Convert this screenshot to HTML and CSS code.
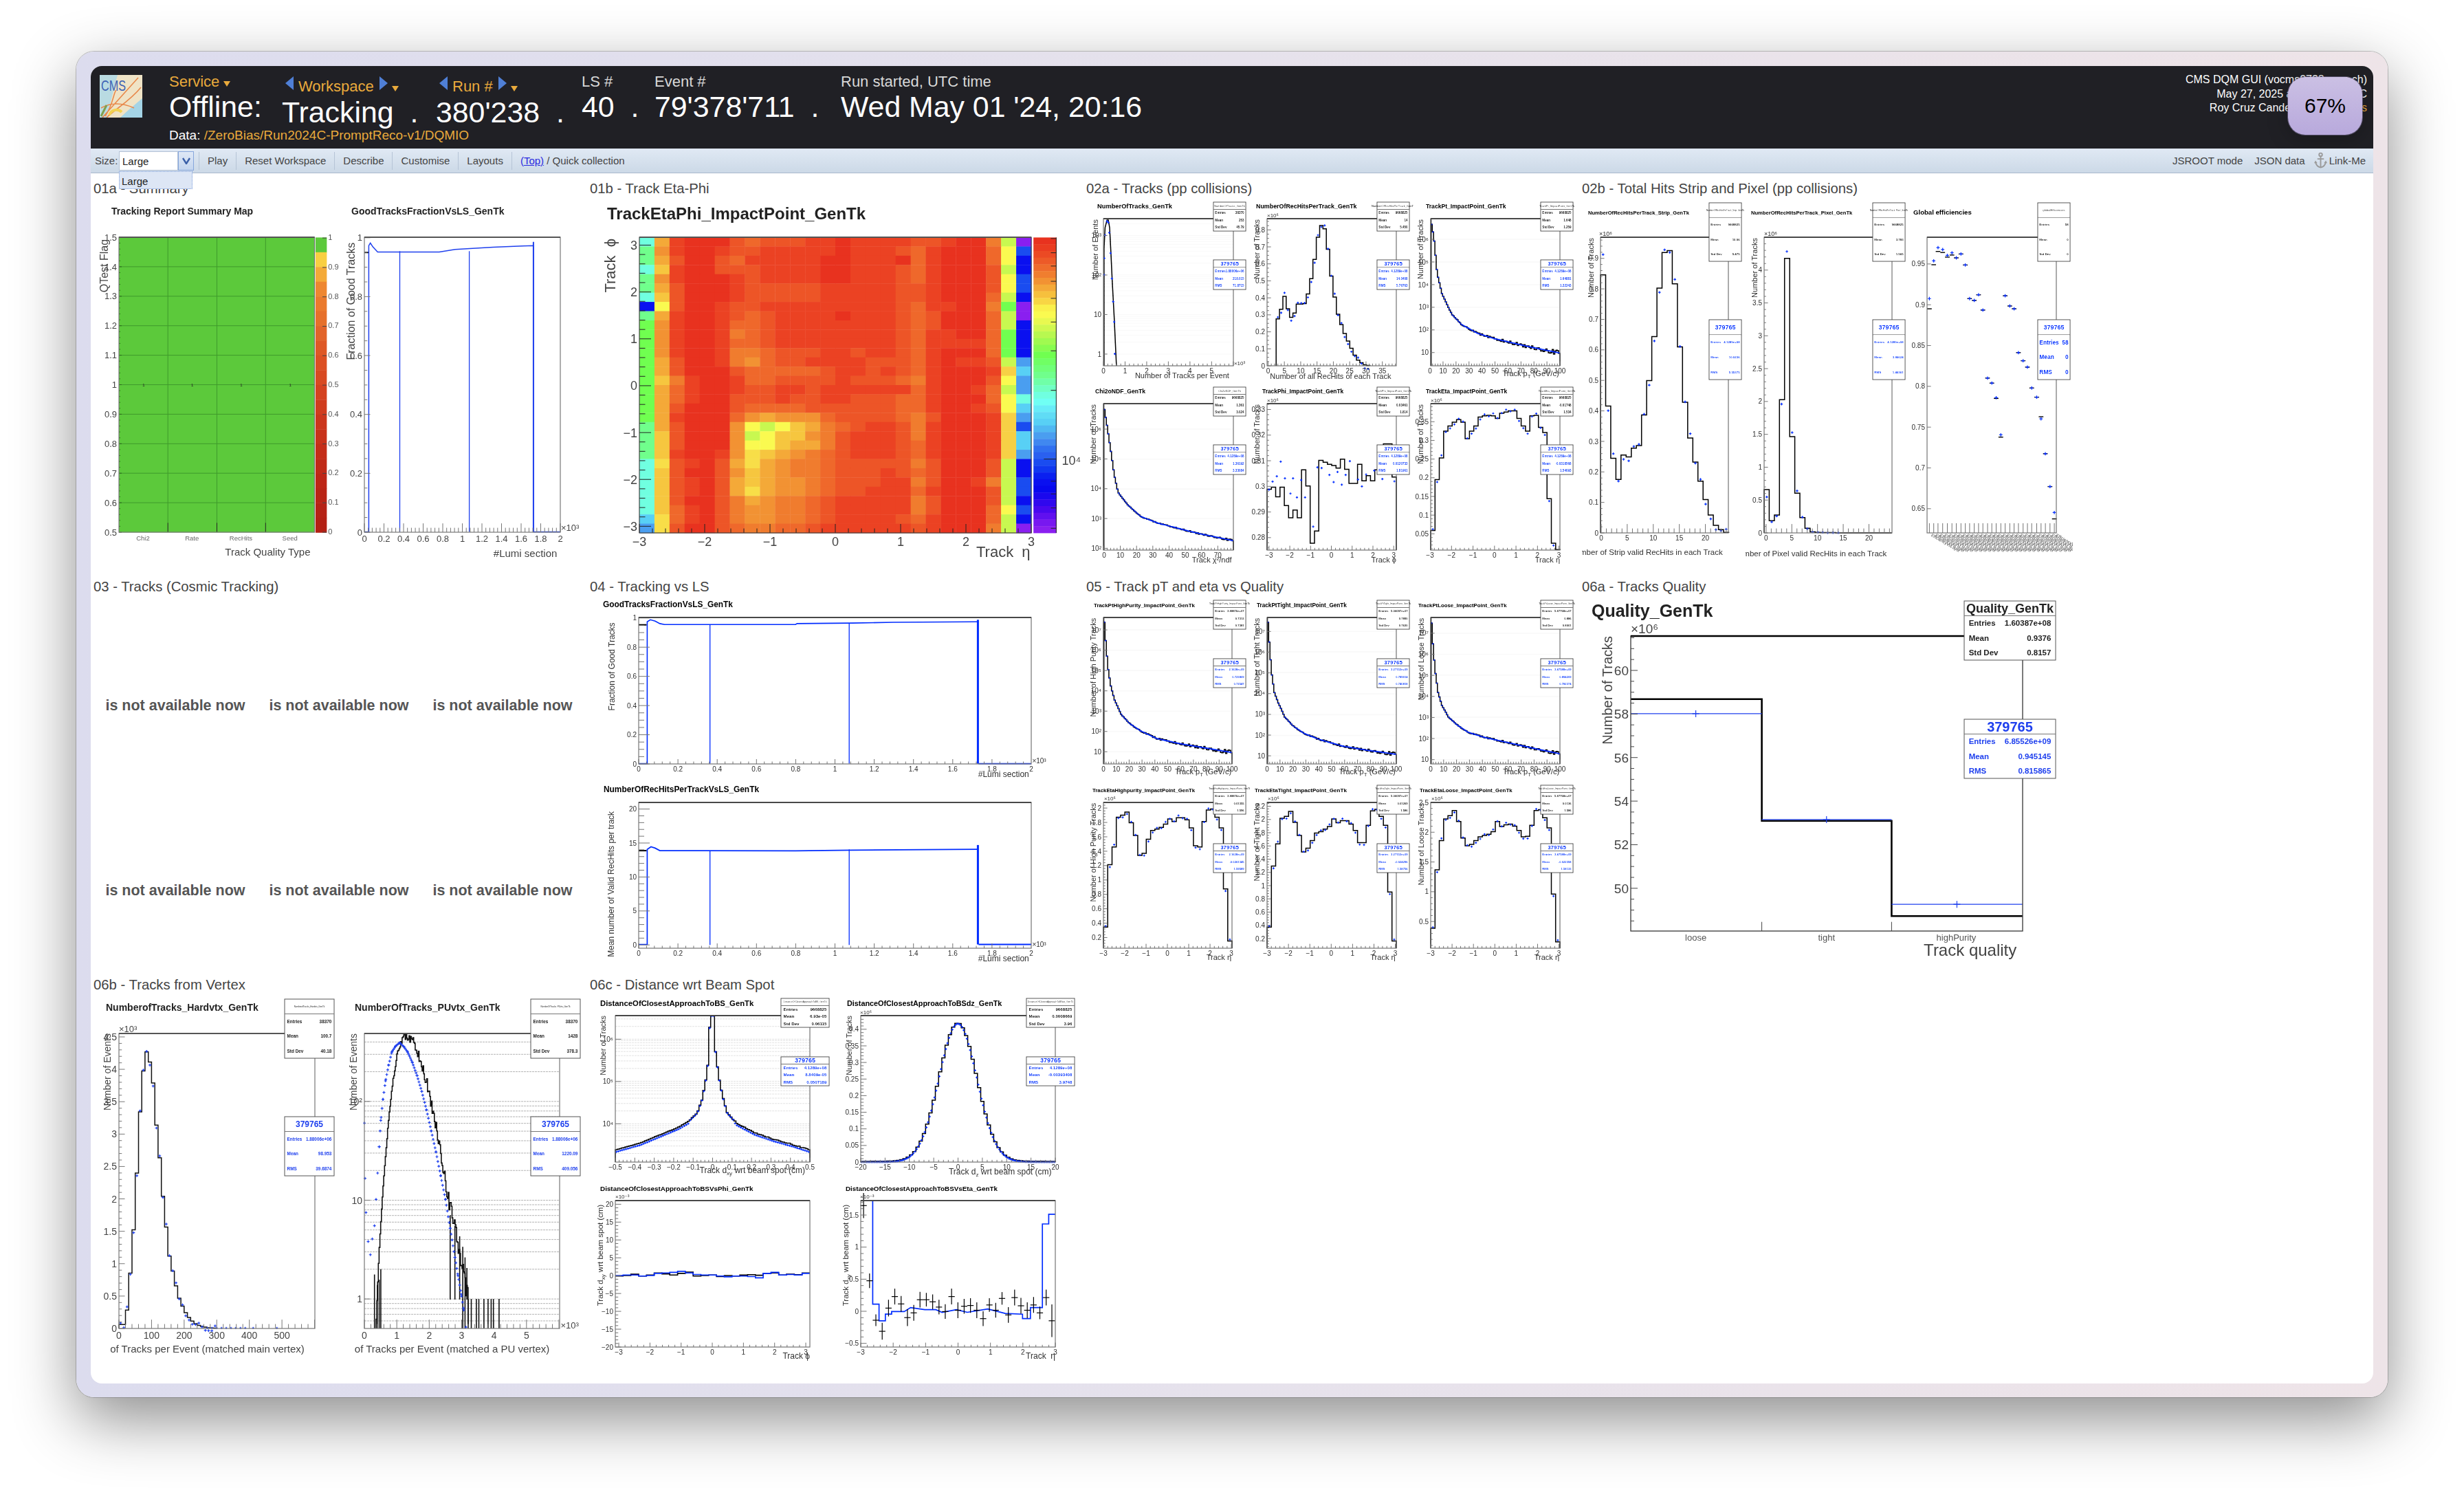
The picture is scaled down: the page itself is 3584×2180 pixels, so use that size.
FILE: index.html
```html
<!DOCTYPE html>
<html lang="en">
<head>
    <meta charset="UTF-8">
    <title>CMS DQM GUI</title>
    <link rel="stylesheet" href="styles.css">
</head>
<body>

<div class="bezel">
<div class="app">

    <header class="head">
        <svg class="logo" viewBox="0 0 62 62" width="62" height="62">
            <rect width="62" height="62" fill="#efe3c6"/>
            <path d="M0 0H26L10 62H0Z" fill="#b9dbe2"/>
            <path d="M62 34V62H30C38 54 50 44 62 34Z" fill="#a4d4e6"/>
            <path d="M4 62C18 46 38 24 56 4M10 62C22 50 44 38 60 18M2 48C16 40 32 40 50 48M8 60C20 42 20 26 24 22" fill="none" stroke="#e8884a" stroke-width="1.6"/>
            <path d="M14 58a11 11 0 0 1 18-4" fill="none" stroke="#f3d252" stroke-width="4"/>
            <path d="M2 60L10 44" stroke="#7fa050" stroke-width="3"/>
            <text class="logo-text" x="2" y="23" textLength="36" lengthAdjust="spacingAndGlyphs">CMS</text>
        </svg>
        <div class="title-block">
            <div class="cols">
                <div class="col col-service">
                    <div class="label orange">Service<span class="caret"></span></div>
                    <div class="value">Offline:</div>
                </div>
                <div class="col col-workspace col-low">
                    <div class="label orange"><span class="arrow-l"></span>Workspace<span class="arrow-r"></span><span class="caret"></span></div>
                    <div class="value">Tracking<span class="dot">.</span></div>
                </div>
                <div class="col col-run col-low">
                    <div class="label orange"><span class="arrow-l"></span>Run #<span class="arrow-r"></span><span class="caret"></span></div>
                    <div class="value">380'238<span class="dot">.</span></div>
                </div>
                <div class="col col-ls">
                    <div class="label">LS #</div>
                    <div class="value">40<span class="dot">.</span></div>
                </div>
                <div class="col col-event">
                    <div class="label">Event #</div>
                    <div class="value">79'378'711<span class="dot">.</span></div>
                </div>
                <div class="col">
                    <div class="label">Run started, UTC time</div>
                    <div class="value">Wed May 01 '24, 20:16</div>
                </div>
            </div>
            <div class="data-line">Data: <span class="orange">/ZeroBias/Run2024C-PromptReco-v1/DQMIO</span></div>
        </div>
        <div class="head-right">
            <div>CMS DQM GUI (vocms0738.cern.ch)</div>
            <div>May 27, 2025 at 14:32:08 UTC</div>
            <div>Roy Cruz Candelaria | <span class="orange">privileges</span></div>
        </div>
        <div class="badge">67%</div>
    </header>

    <nav class="toolbar">
        <span class="size-label">Size:</span>
        <div class="select">
            <span class="select-value">Large</span>
            <span class="select-btn">
                <svg viewBox="0 0 12 10" width="12" height="10"><path d="M1 1L6 9L11 1" fill="none" stroke="#3a5fa8" stroke-width="2.4"/></svg>
            </span>
            <div class="select-menu">Large</div>
        </div>
        <span class="tool">Play</span>
        <span class="tool">Reset Workspace</span>
        <span class="tool">Describe</span>
        <span class="tool">Customise</span>
        <span class="tool">Layouts</span>
        <span class="tool"><a class="top-link">(Top)</a> / Quick collection</span>
        <div class="tools-right">
            <span>JSROOT mode</span>
            <span>JSON data</span>
            <span class="link-me">
                <svg viewBox="0 0 20 26" width="19" height="25"><g fill="none" stroke="#9a9a9a" stroke-width="2"><circle cx="10" cy="4" r="2.4"/><path d="M10 6.5V23M5 10.5H15M2 15C3 20 6 23 10 23.5C14 23 17 20 18 15"/></g><path d="M0 17L2 13L5 17ZM20 17L18 13L15 17Z" fill="#9a9a9a"/></svg>
                Link-Me
            </span>
        </div>
    </nav>

    <main class="content">
        <section>
            <div class="sec-title">01a - Summary</div>
            <div class="plots plots-two-tall" id="p01a"></div>
        </section>
        <section>
            <div class="sec-title">01b - Track Eta-Phi</div>
            <div class="plots plots-one-tall" id="p01b"></div>
        </section>
        <section>
            <div class="sec-title">02a - Tracks (pp collisions)</div>
            <div class="plots plots-six" id="p02a"></div>
        </section>
        <section>
            <div class="sec-title">02b - Total Hits Strip and Pixel (pp collisions)</div>
            <div class="plots plots-three-tall" id="p02b"></div>
        </section>

        <section>
            <div class="sec-title">03 - Tracks (Cosmic Tracking)</div>
            <div class="plots plots-six">
                <div class="na">is not available now</div>
                <div class="na">is not available now</div>
                <div class="na">is not available now</div>
                <div class="na">is not available now</div>
                <div class="na">is not available now</div>
                <div class="na">is not available now</div>
            </div>
        </section>
        <section>
            <div class="sec-title">04 - Tracking vs LS</div>
            <div class="plots plots-wide" id="p04"></div>
        </section>
        <section>
            <div class="sec-title">05 - Track pT and eta vs Quality</div>
            <div class="plots plots-six" id="p05"></div>
        </section>
        <section>
            <div class="sec-title">06a - Tracks Quality</div>
            <div class="plots plots-one-tall" id="p06a"></div>
        </section>

        <section>
            <div class="sec-title">06b - Tracks from Vertex</div>
            <div class="plots plots-two-tall" id="p06b"></div>
        </section>
        <section>
            <div class="sec-title">06c - Distance wrt Beam Spot</div>
            <div class="plots plots-four" id="p06c"></div>
        </section>
    </main>

</div>
</div>

<script src="plots.js"></script>
</body>
</html>
```

FILE: styles.css
```css
/* Window frame */
html, body {
    margin: 0;
    padding: 0;
}

body {
    background-color: #fff;
    font-family: "Liberation Sans", "DejaVu Sans", sans-serif;
    height: 2180px;
    overflow: hidden;
}

.bezel {
    box-sizing: border-box;
    width: 3362px;
    height: 1957px;
    margin: 75px 0 0 111px;
    padding: 21px;
    border-radius: 26px;
    background: linear-gradient(90deg, #dcdcee 0%, #e6e2ec 50%, #eee4e8 100%);
    box-shadow: 0 0 0 1px rgba(90, 90, 90, 0.35), 0 32px 90px rgba(0, 0, 0, 0.45);
}

.app {
    position: relative;
    height: 1916px;
    border-radius: 16px;
    overflow: hidden;
    background-color: #fff;
    display: flex;
    flex-direction: column;
}

/* Dark header */
.head {
    position: relative;
    flex: 0 0 120px;
    display: flex;
    background-color: #202025;
    color: #fff;
    padding: 0 9px 0 13px;
}

.logo {
    margin-top: 13px;
    flex: none;
}

.logo-text {
    font-size: 22px;
    fill: #3d62b5;
    font-family: "Liberation Sans", sans-serif;
}

.title-block {
    margin-left: 39px;
    padding-top: 10px;
    flex: 1;
}

.cols {
    display: flex;
    height: 72px;
}

.col-service { width: 164px; }
.col-workspace { width: 224px; }
.col-run { width: 212px; }
.col-ls { width: 106px; }
.col-event { width: 271px; }

.label {
    font-size: 22px;
    line-height: 26px;
    height: 26px;
    color: #d8d8d8;
    white-space: nowrap;
}

.label.orange {
    color: #e9aa3c;
}

.orange {
    color: #e9aa3c;
}

.value {
    font-size: 42.8px;
    line-height: 46px;
    white-space: nowrap;
}

.col-low .value {
    margin-top: 3px;
}

.col-low .label {
    padding-top: 5px;
}

.dot {
    margin-left: 24px;
}

.caret {
    display: inline-block;
    margin-left: 6px;
    border-left: 5px solid transparent;
    border-right: 5px solid transparent;
    border-top: 8px solid #e9aa3c;
}

.arrow-l, .arrow-r {
    display: inline-block;
    border-top: 10px solid transparent;
    border-bottom: 10px solid transparent;
    vertical-align: 2px;
}

.arrow-l {
    margin-left: 5px;
    margin-right: 7px;
    border-right: 12px solid #4f7fd6;
}

.arrow-r {
    margin-left: 8px;
    border-left: 12px solid #4f7fd6;
}

.data-line {
    margin-top: 7px;
    font-size: 19px;
    line-height: 24px;
    white-space: nowrap;
}

.head-right {
    flex: none;
    padding-top: 10px;
    text-align: right;
    font-size: 16px;
    line-height: 20.5px;
    white-space: nowrap;
}

.badge {
    position: absolute;
    top: 16px;
    right: 16px;
    width: 108px;
    height: 84px;
    display: flex;
    align-items: center;
    justify-content: center;
    border-radius: 25px;
    background: linear-gradient(180deg, #cbc0e4 0%, #b8a9dc 100%);
    box-shadow: 0 0 0 1px rgba(120, 110, 150, 0.6), 0 6px 30px rgba(0, 0, 0, 0.25);
    color: #000;
    font-size: 30px;
}

/* Toolbar */
.toolbar {
    flex: 0 0 35px;
    position: relative;
    z-index: 2;
    display: flex;
    align-items: center;
    padding: 0 11px 0 6px;
    background: linear-gradient(180deg, #e0e9f4 0%, #ccd9e7 100%);
    border-bottom: 1px solid #a9b8cc;
    color: #444;
    font-size: 15px;
}

.size-label {
    width: 35px;
}

.select {
    position: relative;
    display: flex;
    width: 109px;
    height: 28px;
    margin-right: 7px;
}

.select-value {
    box-sizing: border-box;
    width: 86px;
    padding: 5px 0 0 4px;
    background-color: #fff;
    border: 1px solid #b4c2d6;
    color: #222;
}

.select-btn {
    flex: 1;
    display: flex;
    align-items: center;
    justify-content: center;
    background: linear-gradient(180deg, #dfe8f6 0%, #c4d5ee 100%);
    border: 1px solid #86a6dc;
}

.select-menu {
    position: absolute;
    top: 29px;
    left: 0;
    box-sizing: border-box;
    width: 107px;
    height: 26px;
    padding: 5px 0 0 3px;
    background-color: #dde6f5;
    border: 1px dotted #7f9fdc;
    color: #222;
}

.tool {
    padding: 0 12px;
    border-left: 1px solid #b6c4d6;
    line-height: 26px;
    white-space: nowrap;
}

.top-link {
    color: #2a2ae0;
    text-decoration: underline;
}

.tools-right {
    margin-left: auto;
    display: flex;
    align-items: center;
    gap: 17px;
}

.link-me {
    display: flex;
    align-items: center;
    gap: 3px;
    margin-left: -4px;
}

/* Plot sections */
.content {
    flex: 1;
    box-sizing: border-box;
    padding: 10px 0 0 4px;
    display: grid;
    grid-template-columns: 722px 722px 721px 1fr;
    grid-template-rows: 579px 579px 1fr;
}

.sec-title {
    height: 24px;
    line-height: 24px;
    font-size: 20.3px;
    color: #444;
    white-space: nowrap;
}

.plots {
    display: grid;
}

.plots-six {
    grid-template-columns: repeat(3, 238px);
    grid-auto-rows: 269px;
}

.plots-three-tall {
    grid-template-columns: repeat(3, 238px);
    grid-auto-rows: 545px;
}

.plots-two-tall {
    grid-template-columns: repeat(2, 357px);
    grid-auto-rows: 545px;
}

.plots-one-tall {
    grid-template-columns: 722px;
    grid-auto-rows: 545px;
}

.plots-wide {
    grid-template-columns: 722px;
    grid-auto-rows: 269px;
}

.plots-four {
    grid-template-columns: repeat(2, 357px);
    grid-auto-rows: 269px;
}

.plot {
    display: block;
    filter: blur(0.55px);
    font-family: "Liberation Sans", "DejaVu Sans", sans-serif;
}

.plots-six .plot, .plots-three-tall .plot, .plots-wide .plot, .plots-four .plot {
    filter: blur(0.65px) contrast(1.3);
}

.na {
    display: flex;
    align-items: center;
    justify-content: center;
    padding-top: 54px;
    font-size: 21.5px;
    font-weight: bold;
    color: #555;
    white-space: nowrap;
}
```

FILE: plots.js
```js
// ROOT style plots, all data below is read off the plot images.
// Every plot has a frame "f" in its own svg pixels and "z", the same frame in
// the coordinates the data was measured in, so points can be typed as measured.

const BLUE = "#1f40ee";
const BLACK = "#111";

function wob(i) {
    return Math.sin(i * i * 3.7 + i * 1.3);
}

function range(n) {
    return Array.from({ length: n }, (_, i) => i);
}

function interp(tbl, x) {
    for (let i = 1; i < tbl.length; i++) {
        if (x <= tbl[i][0]) {
            let t = (x - tbl[i - 1][0]) / (tbl[i][0] - tbl[i - 1][0]);
            return tbl[i - 1][1] + t * (tbl[i][1] - tbl[i - 1][1]);
        }
    }
    return tbl[tbl.length - 1][1];
}

// histogram outline, up from base and back down to base
function steps(x0, dx, ys, base) {
    let pts = [[x0, base]];
    ys.forEach((y, i) => {
        pts.push([x0 + i * dx, y]);
        pts.push([x0 + (i + 1) * dx, y]);
    });
    pts.push([x0 + ys.length * dx, base]);
    return pts;
}

function centers(x0, dx, ys, off) {
    return ys.map((y, i) => [x0 + (i + 0.5) * dx, y + off * wob(i + 3)]);
}

// smooth table sampled into bins, with some noise growing to the right
function sampled(tbl, x0, x1, n, noise) {
    let dx = (x1 - x0) / n;
    return range(n).map(i => {
        let x = x0 + (i + 0.5) * dx;
        return interp(tbl, x) + noise * (i / n) * wob(i);
    });
}

function plot(id, o) {
    let [x0, y0, x1, y1] = o.f;
    let [a, b, c, d] = o.z;
    let X = v => x0 + (v - a) * (x1 - x0) / (c - a);
    let Y = v => y0 + (v - b) * (y1 - y0) / (d - b);
    let out = "";

    let g = {
        X, Y,
        raw(s) {
            out += s;
        },
        line(pts, col, w) {
            let p = pts.map(q => X(q[0]).toFixed(1) + "," + Y(q[1]).toFixed(1)).join(" ");
            out += `<polyline points="${p}" fill="none" stroke="${col}" stroke-width="${w}"/>`;
        },
        cross(pts, col, r) {
            let s = pts.map(q => {
                let px = X(q[0]), py = Y(q[1]);
                return `M${px - r} ${py}H${px + r}M${px} ${py - r}V${py + r}`;
            }).join("");
            out += `<path d="${s}" stroke="${col}" stroke-width="1.2" fill="none"/>`;
        },
        hlines(ys, col, w, dash) {
            ys.forEach(v => {
                out += `<line x1="${x0}" x2="${x1}" y1="${Y(v)}" y2="${Y(v)}" stroke="${col}" stroke-width="${w}" stroke-dasharray="${dash || "none"}"/>`;
            });
        },
        rect(zx0, zy0, zx1, zy1, col) {
            out += `<rect x="${X(zx0)}" y="${Y(zy0)}" width="${X(zx1) - X(zx0) + 0.4}" height="${Y(zy1) - Y(zy0) + 0.4}" fill="${col}"/>`;
        },
        text(s, zx, zy, size, anchor, col) {
            out += `<text x="${X(zx)}" y="${Y(zy)}" font-size="${size}" text-anchor="${anchor || "start"}" fill="${col || "#444"}">${s}</text>`;
        }
    };

    if (o.draw) o.draw(g);

    // ticks
    let tc = o.tc || "#777";
    let ts = o.ts || 10;
    let lenY = o.tly || (x1 - x0) * 0.03;
    let lenX = o.tlx || (y1 - y0) * 0.03;
    let tick = "";
    if (o.yt) {
        let n = o.yt.labels.length;
        let pos = i => o.yt.a + (o.yt.b - o.yt.a) * i / (n - 1);
        if (o.yt.m) {
            let st = (o.yt.b - o.yt.a) / (n - 1) / o.yt.m;
            for (let k = -30; k < n * o.yt.m + 30; k++) {
                let v = o.yt.a + k * st;
                if (v < b || v > d) continue;
                let len = (k % o.yt.m + o.yt.m) % o.yt.m === 0 ? lenY : lenY / 2;
                tick += `M${x0} ${Y(v)}h${len}`;
            }
        }
        o.yt.labels.forEach((s, i) => {
            if (!o.yt.m) tick += `M${x0} ${Y(pos(i))}h${lenY}`;
            out += `<text x="${x0 - 3}" y="${Y(pos(i)) + ts * 0.36}" font-size="${ts}" text-anchor="end" fill="#444">${s}</text>`;
        });
    }
    if (o.xt) {
        let n = o.xt.labels.length;
        let pos = i => o.xt.a + (o.xt.b - o.xt.a) * i / (n - 1);
        let m = o.xt.m || 1;
        let st = (o.xt.b - o.xt.a) / (n - 1) / m;
        for (let k = -30; k < n * m + 30; k++) {
            let v = o.xt.a + k * st;
            if (v < a || v > c) continue;
            let len = (k % m + m) % m === 0 ? lenX : lenX / 2;
            tick += `M${X(v)} ${y1}v${-len}`;
        }
        o.xt.labels.forEach((s, i) => {
            out += `<text x="${X(pos(i))}" y="${y1 + ts + 1}" font-size="${ts}" text-anchor="middle" fill="#444">${s}</text>`;
        });
    }
    out += `<path d="${tick}" stroke="${tc}" stroke-width="1" fill="none"/>`;

    // frame, the top line is always the heavy one
    let fc = o.fc || "#777";
    out += `<rect x="${x0}" y="${y0}" width="${x1 - x0}" height="${y1 - y0}" fill="none" stroke="${fc}" stroke-width="${o.fw || 1.2}"/>`;
    out += `<line x1="${x0}" x2="${x1}" y1="${y0}" y2="${y0}" stroke="${o.topc || "#555"}" stroke-width="${o.topw || 2.2}"/>`;

    // stat boxes
    (o.stats || []).forEach(s => {
        let [bx0, by0, bx1, by1, title, rows, col, fT, fR, tb] = s;
        let h = by1 - by0;
        let hT = h * 0.25;
        out += `<rect x="${bx0}" y="${by0}" width="${bx1 - bx0}" height="${h}" fill="#fff" stroke="#555" stroke-width="1"/>`;
        out += `<line x1="${bx0}" x2="${bx1}" y1="${by0 + hT}" y2="${by0 + hT}" stroke="#777" stroke-width="1"/>`;
        let weight = tb ? ' font-weight="bold"' : "";
        out += `<text x="${(bx0 + bx1) / 2}" y="${by0 + hT * 0.5 + fT * 0.36}" font-size="${fT}" text-anchor="middle" fill="${col}"${weight}>${title}</text>`;
        rows.forEach((r, i) => {
            let ry = by0 + hT + (h - hT) * (i + 0.5) / 3 + fR * 0.36;
            let pad = (bx1 - bx0) * 0.05;
            out += `<text x="${bx0 + pad}" y="${ry}" font-size="${fR}" font-weight="bold" fill="${col}">${r[0]}</text>`;
            out += `<text x="${bx1 - pad}" y="${ry}" font-size="${fR}" font-weight="bold" text-anchor="end" fill="${col}">${r[1]}</text>`;
        });
    });

    // axis titles and plot title
    if (o.xl) g.text(o.xl[0], o.xl[1], o.xl[2], o.xl[3] || 11, "end");
    if (o.yl) {
        out += `<text transform="rotate(-90 ${X(o.yl[1])} ${Y(o.yl[2])})" x="${X(o.yl[1])}" y="${Y(o.yl[2])}" font-size="${o.yl[3] || 11}" text-anchor="end" fill="#444">${o.yl[0]}</text>`;
    }
    if (o.exp) g.text(o.exp[0], o.exp[1], o.exp[2], o.exp[3] || 10);
    if (o.title) {
        out += `<text x="${o.title[1]}" y="${o.title[2]}" font-size="${o.title[3]}" font-weight="bold" fill="#222">${o.title[0]}</text>`;
    }

    let svg = `<svg class="plot" width="${o.w}" height="${o.h}" viewBox="0 0 ${o.w} ${o.h}">${out}</svg>`;
    document.getElementById(id).insertAdjacentHTML("beforeend", svg);
}

// black box with the reference numbers, blue box with the run numbers
function pair(geo, title, black, blue, fT, fR, fB, tb) {
    let [x0, x1, y0, y1, y2, y3] = geo;
    return [
        [x0, y0, x1, y1, title, [["Entries", black[0]], ["Mean", black[1]], ["Std Dev", black[2]]], "#222", fT, fR, tb],
        [x0, y2, x1, y3, "379765", [["Entries", blue[0]], ["Mean", blue[1]], ["RMS", blue[2]]], BLUE, fB, fR, true]
    ];
}

function logLines(decades, span, top, bottom) {
    let out = [];
    decades.forEach(y => {
        for (let k = 1; k < 10; k++) {
            let v = y - Math.log10(k) * span;
            if (v > top && v < bottom) out.push(v);
        }
    });
    return out;
}

const TALL = 545;
const GEO_SIX = [185, 232, 8, 50, 92, 135];
const ETA = ["−3", "−2", "−1", "0", "1", "2", "3"];
const ONE_SIX = (t, a, b) => pair(GEO_SIX, t, a, b, 4, 4.6, 8);
const LUMI = ["0", "0.2", "0.4", "0.6", "0.8", "1", "1.2", "1.4", "1.6", "1.8", "2"];
const PCT = ["0", "10", "20", "30", "40", "50", "60", "70", "80", "90", "100"];
const PT_LABEL = "Track p<tspan dy=\"3\" font-size=\"8\">T</tspan><tspan dy=\"-3\"> (GeV/c)</tspan>";

/* ---------- 01a Summary ---------- */
const BANDS = ["#5cc93b", "#f8cf42", "#f4aa38", "#ee8731", "#ea7a2d", "#e6702b", "#e2642a", "#de5826", "#dc5023", "#d84a22",
    "#d44220", "#d03c1e", "#cb361c", "#c8321a", "#c42d18", "#c02a17", "#bd2616", "#b92415", "#b52215", "#b32014"];

plot("p01a", {
    w: 357, h: TALL, f: [37, 59, 321.5, 488], z: [116, 257, 735, 1417], ts: 13,
    title: ["Tracking Report Summary Map", 26, 26, 14],
    tc: "#2c6a1e", tly: 4, tlx: 0.1,
    yt: { labels: ["1.5", "1.4", "1.3", "1.2", "1.1", "1", "0.9", "0.8", "0.7", "0.6", "0.5"], a: 257, b: 1417, m: 5 },
    xl: ["Track Quality Type", 722, 1510, 15],
    yl: ["QTest Flag", 82, 265, 16],
    draw(g) {
        g.rect(116, 257, 735, 1417, "#5cc93b");
        g.hlines([373, 489, 605, 721, 837, 953, 1069, 1185, 1301], "#3f9a2c", 1);
        [271, 426, 580].forEach(x => {
            g.line([[x, 257], [x, 1380]], "#3f9a2c", 1);
            g.line([[x, 1380], [x, 1417]], "#222", 1);
        });
        [194, 348, 503, 658].forEach(x => g.text("1", x, 845, 6, "middle", "#222"));
        [["Chi2", 192], ["Rate", 347], ["RecHits", 502], ["Seed", 657]].forEach(t => g.text(t[0], t[1], 1450, 9.5, "middle", "#666"));
        BANDS.forEach((col, i) => g.rect(738, 258 + i * 58, 773, 258 + (i + 1) * 58, col));
        ["1", "0.9", "0.8", "0.7", "0.6", "0.5", "0.4", "0.3", "0.2", "0.1", "0"].forEach((s, i) => {
            g.text(s, 778, 268 + i * 115.7, 11, "start", "#555");
            g.line([[760, 260 + i * 115.7], [773, 260 + i * 115.7]], "#444", 1);
        });
    }
});

plot("p01a", {
    w: 357, h: TALL, f: [37, 59, 322, 488], z: [893, 257, 1513, 1417], ts: 13,
    title: ["GoodTracksFractionVsLS_GenTk", 18, 26, 14],
    yt: { labels: ["0", "0.2", "0.4", "0.6", "0.8", "1"], a: 1417, b: 259, m: 4 },
    xt: { labels: LUMI, a: 893, b: 1513, m: 5 },
    xl: ["#Lumi section", 1503, 1515, 15],
    yl: ["Fraction of Good Tracks", 862, 278, 16],
    exp: ["×10³", 1515, 1412, 13],
    draw(g) {
        g.line([[893, 317], [907, 317]], BLACK, 2);
        g.line([[893, 1416], [907, 1416], [907, 290], [912, 280], [920, 295], [935, 315], [1000, 315], [1130, 315], [1180, 305], [1300, 296], [1428, 290], [1428, 1416], [1513, 1416]], BLUE, 1.5);
        [1005, 1225].forEach(x => g.line([[x, 312], [x, 1416]], BLUE, 1.3));
        g.line([[1428, 275], [1428, 1416]], BLUE, 2);
    }
});

/* ---------- 01b Eta-Phi ---------- */
const HEAT = {
    1: "#e8321f", 2: "#eb4223", 3: "#ed5527", 4: "#ef682b", 5: "#f07c2e", 6: "#f29233", 7: "#f4a938", 8: "#f6c63f", 9: "#f8de48",
    o: "#f7d045", Y: "#fafa50", y: "#c8f850", G: "#70ff50", g: "#70ff8c", t: "#70ffe0", c: "#58d0f5", l: "#4a9ef0", b: "#1a4cf0", B: "#0a10f0", V: "#8a1ff0"
};
const ROWS = [
    "t72111343332212222332115yV", "g62112332222212223421114Yb", "g73113422222112221421114YB", "t82113332222112223421113yB",
    "g62111232222112223421113Yb", "g73111233333222223321113Yb", "t83111233333222223321114yB", "BY3112332222222223422115GV",
    "g72112343222212223431114yV", "G62112443222222223431114yB", "G62112543222222223422114GB", "G62112443222222223422224GB",
    "G62112554333223223421114GB", "G73112564332222333421223yl", "G73111344444322323421112oc", "G85211244333323334521113Yl",
    "G74211233223222222421124yl", "G74211333233223334421114Yt", "G73111344443333334421123Yc", "G72111467666433334531112ol",
    "g731116YyY87543223521112ob", "g831116yY886532223521112oc", "g831116YY877532223421112oc", "g82112698765432223421112ol",
    "t93213797655433333531113yB", "t83113687655433323431113yB", "t83213787665433322531125yb", "t83213797665433222421113yb",
    "t83113576554322222531113yB", "t84213566554322222531114Yb", "c94213566554322223421114yB", "l93113455443222222321115yV"
];
const RAMP = ["#e8321f", "#ea3c21", "#eb4a24", "#ed5a28", "#ef6c2c", "#f07e2f", "#f29233", "#f4a938", "#f6c03d", "#f8d544",
    "#faf04c", "#fafa50", "#e8f850", "#d0f850", "#b8f850", "#a0fa50", "#88fc50", "#70ff50", "#70ff64", "#70ff78", "#70ff8c",
    "#70ffa8", "#70ffc4", "#70ffe0", "#70fff4", "#68ecf8", "#60dcf5", "#58d0f5", "#50b8f2", "#4a9ef0", "#4088f0", "#3070f0",
    "#2a60f0", "#1a4cf0", "#1038f0", "#0a20f0", "#0a10f0", "#0808ee", "#1a08ee", "#3008ee", "#4808ee", "#6010ef", "#7818f0", "#8a1ff0"];

plot("p01b", {
    w: 722, h: TALL, f: [72, 59, 642, 489], z: [197, 257, 1438, 1418], ts: 18,
    title: ["TrackEtaPhi_ImpactPoint_GenTk", 25, 33, 24],
    tc: "#222", tly: 17, tlx: 13,
    yt: { labels: ["3", "2", "1", "0", "−1", "−2", "−3"], a: 288, b: 1392, m: 5 },
    xt: { labels: ETA, a: 197, b: 1438, m: 5 },
    xl: ["Track&#160;&#160;η", 1435, 1512, 22],
    yl: ["Track&#160;&#160;ϕ", 120, 262, 22],
    fc: "#444",
    draw(g) {
        let dx = (1438 - 197) / 26, dy = (1418 - 257) / 32;
        ROWS.forEach((row, r) => {
            for (let i = 0; i < 26; i++) {
                g.rect(197 + i * dx, 257 + r * dy, 197 + (i + 1) * dx, 257 + (r + 1) * dy, HEAT[row[i]]);
            }
        });
        let band = (1418 - 258) / RAMP.length;
        RAMP.forEach((col, i) => g.rect(1445, 258 + i * band, 1517, 258 + (i + 1) * band, col));
        g.line([[1517, 258], [1517, 1418]], "#222", 1);
        [262, 318, 370, 430, 497, 590, 703, 858, 1128, 1215, 1265, 1320, 1400].forEach(y => {
            g.line([[y === 1128 ? 1478 : 1500, y], [1517, y]], "#222", 1);
        });
        g.text("10⁴", 1535, 1150, 18);
    }
});

/* ---------- 02a Tracks ---------- */
plot("p02a", {
    w: 238, h: 269, f: [25, 32, 214, 246], z: [95, 185, 495, 762],
    title: ["NumberOfTracks_GenTk", 16, 17, 9.3],
    yt: { labels: ["1", "10", "10²", "10³"], a: 716, b: 251, m: 0 },
    xt: { labels: ["0", "1", "2", "3", "4", "5"], a: 95, b: 428, m: 5 },
    xl: ["Number of Tracks per Event", 482, 810],
    yl: ["Number of Events", 78, 188],
    exp: ["×10³", 497, 758, 8],
    stats: ONE_SIX("NumberOfTracks_GenTk", ["38370", "253", "45.79"], ["1.88006e+06", "218.015", "71.8715"]),
    draw(g) {
        g.hlines(logLines([716, 561, 406, 251], 155, 185, 762), "#ddd", 1);
        let pts = [[97, 762], [97, 300], [100, 220], [106, 190], [110, 190], [114, 220], [118, 320], [122, 430], [128, 570], [132, 680], [135, 762]];
        g.line(pts, BLACK, 1.5);
        g.cross([[97, 405], [98, 340], [100, 250], [106, 195], [110, 200], [113, 240], [117, 320], [121, 420], [125, 510], [128, 590], [130, 715]], BLUE, 1.6);
    }
});

const RECHITS = [578, 540, 490, 538, 572, 555, 520, 520, 518, 480, 420, 345, 258, 212, 225, 305, 410, 492, 560, 600, 635, 665, 693, 720, 740, 750, 758, 761];
plot("p02a", {
    w: 238, h: 269, f: [25, 32, 213, 246], z: [600, 185, 998, 762],
    title: ["NumberOfRecHitsPerTrack_GenTk", 9, 17, 8.9],
    yt: { labels: ["0", "0.1", "0.2", "0.3", "0.4", "0.5", "0.6", "0.7", "0.8"], a: 762, b: 229, m: 4 },
    xt: { labels: ["0", "5", "10", "15", "20", "25", "30", "35"], a: 603, b: 955, m: 5 },
    xl: ["Number of all RecHits of each Track", 982, 812],
    yl: ["Number of Tracks", 576, 188],
    exp: ["×10⁶", 600, 180, 8],
    stats: ONE_SIX("NumberOfRecHitsPerTrack_GenTk", ["9668825", "14", "5.450"], ["4.1289e+08", "14.0408", "5.76763"]),
    draw(g) {
        g.line(steps(628, 10.3, RECHITS, 762), BLACK, 1.5);
        g.cross(centers(628, 10.3, RECHITS, 14), BLUE, 1.6);
    }
});

function ptPlot(o, tbl, noise) {
    let top = o.z[1], base = o.z[3];
    return Object.assign(o, {
        draw(g) {
            g.hlines(o.gridYs, "#ddd", 1.6);
            let x0 = o.z[0] + 1, x1 = o.z[2];
            let vals = sampled(tbl, x0, x1, 100, noise);
            g.line(steps(x0, (x1 - x0) / 100, vals, base), BLACK, 1.5);
            let clean = sampled(tbl, x0, x1, 100, 0);
            g.cross(centers(x0, (x1 - x0) / 100, clean, 0), BLUE, 1.1);
            g.line([[x0, base], [x0, top]], BLACK, 1.5);
        }
    });
}

plot("p02a", ptPlot({
    w: 238, h: 269, f: [25, 32, 213, 246], z: [1105, 185, 1503, 762],
    title: ["TrackPt_ImpactPoint_GenTk", 18, 17, 8.6],
    yt: { labels: ["10", "10²", "10³", "10⁴", "10⁵", "10⁶"], a: 710, b: 266, m: 0 },
    xt: { labels: PCT, a: 1103, b: 1503, m: 5 },
    xl: [PT_LABEL, 1500, 803],
    yl: ["Number of Tracks", 1082, 188],
    gridYs: [710, 622, 533, 444, 355, 266],
    stats: ONE_SIX("TrackPt_ImpactPoint_GenTk", ["9668825", "1.648", "1.259"], ["4.1289e+08", "1.64881", "1.22243"])
}, [[1105, 185], [1115, 260], [1125, 400], [1140, 480], [1170, 560], [1200, 600], [1250, 635], [1300, 655], [1400, 685], [1503, 712]], 9));

plot("p02a", ptPlot({
    w: 238, h: 269, f: [25, 32, 214, 245], z: [95, 912, 495, 1487],
    title: ["Chi2oNDF_GenTk", 13, 17, 8.6],
    yt: { labels: ["10²", "10³", "10⁴", "10⁵", "10⁶"], a: 1480, b: 1012, m: 0 },
    xt: { labels: ["0", "10", "20", "30", "40", "50", "60", "70"], a: 97, b: 447, m: 5 },
    xl: ["Track χ²/ndf", 490, 1535],
    yl: ["Number of Tracks", 72, 915],
    gridYs: [1363, 1247, 1130, 1012],
    stats: ONE_SIX("Chi2oNDF_GenTk", ["9668825", "1.361", "3.024"], ["4.1289e+08", "1.36192", "3.33084"])
}, [[95, 912], [107, 1005], [118, 1100], [128, 1190], [140, 1260], [170, 1310], [210, 1355], [260, 1380], [350, 1410], [400, 1425], [495, 1450]], 4));

const PHI = [1248, 1240, 1278, 1240, 1312, 1360, 1330, 1360, 1172, 1235, 1460, 1412, 1135, 1142, 1150, 1155, 1165, 1130, 1170, 1225, 1225, 1150, 1215, 1195, 1215, 1172, 1140, 1070, 1070, 1200];
plot("p02a", {
    w: 238, h: 269, f: [25, 32, 213, 245], z: [600, 912, 998, 1487],
    title: ["TrackPhi_ImpactPoint_GenTk", 18, 17, 8.4],
    yt: { labels: ["0.28", "0.29", "0.3", "0.31", "0.32", "0.33"], a: 1438, b: 935, m: 5 },
    xt: { labels: ETA, a: 606, b: 990, m: 5 },
    xl: ["Track ϕ", 998, 1535],
    yl: ["Number of Tracks", 576, 915],
    exp: ["×10⁶", 600, 906, 8],
    stats: ONE_SIX("TrackPhi_ImpactPoint_GenTk", ["9668825", "0.03461", "1.814"], ["4.1289e+08", "0.0120733", "1.81961"]),
    draw(g) {
        g.line(steps(600, 13.27, PHI, 1487), BLACK, 1.5);
        g.cross([[606, 1250], [617, 1218], [630, 1197], [642, 1140], [655, 1205], [680, 1205], [672, 1265], [692, 1280], [705, 1212], [717, 1280], [742, 1395], [755, 1162], [768, 1165], [792, 1192], [805, 1220], [817, 1180], [830, 1230], [842, 1192], [855, 1138], [880, 1210], [892, 1237], [905, 1190], [930, 1175], [955, 1208], [992, 1217]], BLUE, 1.6);
    }
});

const ETA02 = [1410, 1210, 1125, 1020, 1000, 985, 975, 985, 1050, 1020, 1000, 965, 960, 958, 960, 970, 950, 945, 940, 940, 970, 1000, 1020, 960, 958, 1005, 1025, 1285, 1460, 1485];
plot("p02a", {
    w: 238, h: 269, f: [25, 32, 213, 245], z: [1105, 912, 1503, 1487],
    title: ["TrackEta_ImpactPoint_GenTk", 18, 17, 8.4],
    yt: { labels: ["0.05", "0.1", "0.15", "0.2", "0.25", "0.3", "0.35"], a: 1423, b: 983, m: 5 },
    xt: { labels: ETA, a: 1103, b: 1500, m: 5 },
    xl: ["Track η", 1503, 1535],
    yl: ["Number of Tracks", 1082, 915],
    exp: ["×10⁶", 1105, 906, 8],
    stats: ONE_SIX("TrackEta_ImpactPoint_GenTk", ["9668825", "-0.01748", "1.534"], ["4.1289e+08", "-0.0318568", "1.54093"]),
    draw(g) {
        g.line(steps(1105, 13.27, ETA02, 1487), BLACK, 1.5);
        g.cross(centers(1105, 13.27, ETA02.slice(0, 29), 10), BLUE, 1.5);
    }
});

/* ---------- 02b Hits ---------- */
const GEO_TALL = [185, 232, 9, 94, 179, 266];
const STRIP = [405, 920, 1125, 1208, 1112, 1120, 1085, 1075, 955, 820, 647, 457, 317, 310, 440, 688, 905, 1045, 1140, 1215, 1287, 1348, 1388, 1405, 1416];
plot("p02b", {
    w: 238, h: TALL, f: [27, 59, 213, 489], z: [78, 257, 462, 1418],
    title: ["NumberOfRecHitsPerTrack_Strip_GenTk", 9, 26, 7.6],
    yt: { labels: ["0", "0.1", "0.2", "0.3", "0.4", "0.5", "0.6", "0.7", "0.8", "0.9"], a: 1418, b: 340, m: 5 },
    xt: { labels: ["0", "5", "10", "15", "20"], a: 80, b: 393, m: 5 },
    xl: ["Number of Strip valid RecHits in each Track", 445, 1505, 11.5],
    yl: ["Number of Tracks", 58, 260, 11],
    exp: ["×10⁶", 74, 252, 9],
    stats: pair(GEO_TALL, "NumberOfRecHitsPerTrack_Strip_GenTk", ["9668825", "10.06", "5.475"], ["4.1289e+08", "10.0236", "5.55375"], 3, 4.4, 9),
    draw(g) {
        g.line(steps(78, 15.4, STRIP, 1418), BLACK, 1.5);
        g.cross(centers(78, 15.4, STRIP, 18).map((p, i) => (i === 0 ? [p[0], 325] : p)), BLUE, 1.8);
    }
});

const PIXEL = [1248, 1370, 1348, 895, 340, 1040, 1262, 1358, 1400, 1414, 1416, 1417, 1417, 1417, 1418, 1418, 1418, 1418, 1418, 1418, 1418, 1418, 1418, 1418, 1418];
plot("p02b", {
    w: 238, h: TALL, f: [27, 59, 213, 489], z: [565, 257, 953, 1418],
    title: ["NumberOfRecHitsPerTrack_Pixel_GenTk", 8, 26, 7.6],
    yt: { labels: ["0", "0.5", "1", "1.5", "2", "2.5", "3", "3.5", "4"], a: 1418, b: 386, m: 5 },
    xt: { labels: ["0", "5", "10", "15", "20"], a: 571, b: 883, m: 5 },
    xl: ["Number of Pixel valid RecHits in each Track", 937, 1510, 11.5],
    yl: ["Number of Tracks", 544, 260, 11],
    exp: ["×10⁶", 565, 252, 9],
    stats: pair(GEO_TALL, "NumberOfRecHitsPerTrack_Pixel_GenTk", ["9668825", "3.783", "1.565"], ["4.1289e+08", "3.86624", "1.46361"], 3, 4.4, 9),
    draw(g) {
        g.line(steps(565, 15.5, PIXEL, 1418), BLACK, 1.5);
        g.cross([[573, 1277], [588, 1375], [603, 1352], [618, 912], [634, 313], [650, 1024], [665, 1253], [681, 1356], [696, 1402], [712, 1414], [728, 1416], [743, 1416], [758, 1417], [774, 1417], [790, 1417]], BLUE, 1.8);
    }
});

const EFF = [[1062, 498, 538], [1075, 350, 365], [1088, 298, 313], [1102, 305, 317], [1116, 328, 335], [1130, 318, 327], [1143, 338, 338], [1157, 323, 323], [1170, 366, 366], [1183, 498, 498], [1197, 505, 505], [1210, 483, 483], [1223, 543, 543], [1237, 810, 810], [1250, 830, 830], [1263, 887, 890], [1277, 1033, 1042], [1290, 487, 487], [1304, 527, 527], [1317, 538, 538], [1330, 710, 710], [1344, 742, 742], [1357, 767, 767], [1370, 849, 849], [1385, 885, 885], [1398, 970, 962], [1411, 1107, 1107], [1425, 1236, 1236], [1438, 1338, 1363]];
plot("p02b", {
    w: 238, h: TALL, f: [26, 59, 214, 489], z: [1055, 257, 1444, 1418],
    title: ["Global efficiencies", 6, 26, 9.6],
    yt: { labels: ["0.65", "0.7", "0.75", "0.8", "0.85", "0.9", "0.95"], a: 1323, b: 362, m: 0 },
    stats: [
        [187, 9, 234, 94, "globalEfficiencies", [["Entries", "58"], ["Mean", "0"], ["Std Dev", "0"]], "#222", 4.2, 4.4],
        [187, 179, 234, 266, "379765", [["Entries", "58"], ["Mean", "0"], ["RMS", "0"]], BLUE, 9, 8.4, true]
    ],
    draw(g) {
        EFF.forEach(p => {
            g.line([[p[0] - 7, p[2]], [p[0] + 7, p[2]]], BLACK, 1.4);
            g.cross([[p[0], p[1]]], BLUE, 2.4);
        });
        EFF.forEach(p => {
            g.line([[p[0], 1380], [p[0], 1418]], "#777", 1);
            let lx = g.X(p[0]) + 2, ly = g.Y(1430);
            g.raw(`<text transform="rotate(30 ${lx} ${ly})" x="${lx}" y="${ly}" font-size="6" fill="#555">EfficiencyVsLayer</text>`);
        });
    }
});

/* ---------- 04 Tracking vs LS ---------- */
plot("p04", {
    w: 722, h: 269, f: [71, 33, 642, 246], z: [193, 183, 1437, 760],
    title: ["GoodTracksFractionVsLS_GenTk", 19, 18, 11.9],
    tly: 16, tlx: 7,
    yt: { labels: ["0", "0.2", "0.4", "0.6", "0.8", "1"], a: 760, b: 185, m: 4 },
    xt: { labels: LUMI, a: 193, b: 1437, m: 5 },
    xl: ["#Lumi section", 1430, 812, 12],
    yl: ["Fraction of Good Tracks", 116, 203, 12],
    exp: ["×10³", 1440, 757, 10],
    draw(g) {
        g.line([[193, 212], [218, 212]], BLACK, 2);
        g.line([[193, 759], [220, 759], [220, 200], [230, 192], [245, 197], [260, 207], [275, 211], [690, 211], [695, 207], [870, 205], [1000, 202], [1266, 200]], BLUE, 1.6);
        g.line([[419, 211], [419, 759]], BLUE, 1.3);
        g.line([[860, 205], [860, 759]], BLUE, 1.3);
        g.line([[1268, 192], [1268, 759]], BLUE, 3);
        g.line([[1270, 759], [1437, 759]], BLUE, 1.6);
    }
});

plot("p04", {
    w: 722, h: 269, f: [71, 33, 642, 245], z: [193, 910, 1437, 1485],
    title: ["NumberOfRecHitsPerTrackVsLS_GenTk", 20, 18, 11.9],
    tly: 16, tlx: 7,
    yt: { labels: ["0", "5", "10", "15", "20"], a: 1472, b: 936, m: 5 },
    xt: { labels: LUMI, a: 193, b: 1437, m: 5 },
    xl: ["#Lumi section", 1430, 1537, 12],
    yl: ["Mean number of Valid RecHits per track", 114, 945, 12],
    exp: ["×10³", 1440, 1480, 10],
    draw(g) {
        g.line([[193, 1100], [218, 1100]], BLACK, 2);
        g.line([[193, 1470], [220, 1470], [220, 1095], [232, 1085], [245, 1090], [260, 1100], [690, 1101], [870, 1098], [1266, 1095]], BLUE, 1.7);
        g.line([[419, 1100], [419, 1472]], BLUE, 1.3);
        g.line([[860, 1095], [860, 1472]], BLUE, 1.3);
        g.line([[1268, 1078], [1268, 1470]], BLUE, 3);
        g.line([[1270, 1470], [1437, 1470]], BLUE, 1.8);
    }
});

/* ---------- 05 pT and eta vs quality ---------- */
const GEO_05 = [185, 232, 8, 50, 93, 135];
const ONE_05 = (t, a, b) => pair(GEO_05, t, a, b, 3.4, 4.2, 8);
const TEN7 = ["10", "10²", "10³", "10⁴", "10⁵", "10⁶", "10⁷"];

plot("p05", ptPlot({
    w: 238, h: 269, f: [25, 33, 212, 246], z: [95, 183, 492, 760],
    title: ["TrackPtHighPurity_ImpactPoint_GenTk", 11, 18, 7.9],
    yt: { labels: TEN7, a: 712, b: 232, m: 0 },
    xt: { labels: PCT, a: 95, b: 492, m: 5 },
    xl: [PT_LABEL, 490, 800],
    yl: ["Number of High Purity Tracks", 72, 185],
    gridYs: [712, 632, 552, 472, 392, 312, 232],
    stats: ONE_05("TrackPtHighPurity_ImpactPoint_GenTk", ["3.88876e+07", "0.7313", "0.7381"], ["2.1638e+09", "0.723809", "0.72547"])
}, [[97, 183], [100, 240], [104, 310], [110, 390], [118, 455], [130, 510], [150, 565], [175, 600], [210, 630], [260, 660], [330, 680], [400, 695], [492, 715]], 8));

plot("p05", ptPlot({
    w: 238, h: 269, f: [25, 33, 213, 246], z: [597, 183, 997, 760],
    title: ["TrackPtTight_ImpactPoint_GenTk", 10, 18, 8.2],
    yt: { labels: TEN7, a: 728, b: 238, m: 0 },
    xt: { labels: PCT, a: 597, b: 997, m: 5 },
    xl: [PT_LABEL, 994, 800],
    yl: ["Number of Tight Tracks", 573, 185],
    gridYs: [728, 648, 566, 484, 400, 318, 238],
    stats: ONE_05("TrackPtTight_ImpactPoint_GenTk", ["5.06097e+07", "0.7890", "0.7630"], ["3.27153e+09", "0.789014", "0.740818"])
}, [[599, 183], [602, 240], [606, 320], [612, 410], [620, 480], [632, 520], [652, 575], [677, 610], [712, 640], [762, 665], [832, 690], [902, 705], [997, 722]], 7));

plot("p05", ptPlot({
    w: 238, h: 269, f: [25, 33, 213, 246], z: [1101, 183, 1500, 760],
    title: ["TrackPtLoose_ImpactPoint_GenTk", 7, 18, 7.8],
    yt: { labels: TEN7, a: 743, b: 245, m: 0 },
    xt: { labels: PCT, a: 1101, b: 1500, m: 5 },
    xl: [PT_LABEL, 1498, 800],
    yl: ["Number of Loose Tracks", 1080, 185],
    gridYs: [743, 658, 576, 494, 410, 328, 245],
    stats: ONE_05("TrackPtLoose_ImpactPoint_GenTk", ["5.87768e+07", "0.886", "0.8001"], ["3.47588e+09", "0.894209", "0.782374"])
}, [[1103, 183], [1106, 250], [1110, 325], [1116, 405], [1124, 480], [1136, 530], [1156, 575], [1181, 605], [1216, 635], [1266, 655], [1336, 675], [1406, 695], [1500, 720]], 7));

function etaPlot(o, ys) {
    let x0 = o.z[0], dx = (o.z[2] - o.z[0]) / 30;
    return Object.assign(o, {
        draw(g) {
            g.line(steps(x0, dx, ys, o.z[3]), BLACK, 1.5);
            let blue = centers(x0, dx, ys, 9);
            g.cross(blue, BLUE, 1.5);
        }
    });
}

plot("p05", etaPlot({
    w: 238, h: 269, f: [25, 33, 212, 245], z: [95, 910, 492, 1483],
    title: ["TrackEtaHighpurity_ImpactPoint_GenTk", 9, 18, 7.8],
    yt: { labels: ["0.2", "0.4", "0.6", "0.8", "1", "1.2", "1.4", "1.6", "1.8", "2"], a: 1441, b: 932, m: 5 },
    xt: { labels: ETA, a: 95, b: 490, m: 5 },
    xl: ["Track η", 490, 1530],
    yl: ["Number of High Purity Tracks", 72, 912],
    exp: ["×10⁶", 97, 902, 8],
    stats: ONE_05("TrackEtaHighpurity_ImpactPoint_GenTk", ["3.88876e+07", "0.01355", "1.596"], ["2.1638e+09", "-0.0261345", "1.59589"])
}, [1400, 1155, 1085, 968, 960, 948, 990, 1040, 1118, 1110, 1055, 1020, 1015, 1008, 995, 975, 985, 970, 970, 978, 1010, 1080, 1085, 985, 940, 936, 968, 1010, 1250, 1455]));

plot("p05", etaPlot({
    w: 238, h: 269, f: [25, 33, 213, 245], z: [597, 910, 997, 1483],
    title: ["TrackEtaTight_ImpactPoint_GenTk", 7, 18, 8.1],
    yt: { labels: ["0.2", "0.4", "0.6", "0.8", "1", "1.2", "1.4", "1.6", "1.8", "2", "2.2"], a: 1445, b: 925, m: 5 },
    xt: { labels: ETA, a: 597, b: 994, m: 5 },
    xl: ["Track η", 994, 1530],
    yl: ["Number of Tight Tracks", 573, 912],
    exp: ["×10⁶", 599, 902, 8],
    stats: ONE_05("TrackEtaTight_ImpactPoint_GenTk", ["5.06097e+07", "0.01269", "1.586"], ["3.27153e+09", "-0.024296", "1.58756"])
}, [1400, 1160, 1073, 972, 965, 945, 988, 1040, 1105, 1090, 1060, 1030, 1025, 1015, 1005, 975, 990, 982, 982, 995, 1020, 1068, 1068, 1000, 943, 937, 965, 1000, 1262, 1455]));

plot("p05", etaPlot({
    w: 238, h: 269, f: [25, 33, 213, 245], z: [1101, 910, 1500, 1483],
    title: ["TrackEtaLoose_ImpactPoint_GenTk", 9, 18, 7.9],
    yt: { labels: ["0.5", "1", "1.5", "2", "2.5"], a: 1378, b: 910, m: 5 },
    xt: { labels: ETA, a: 1101, b: 1497, m: 5 },
    xl: ["Track η", 1498, 1530],
    yl: ["Number of Loose Tracks", 1080, 912],
    exp: ["×10⁶", 1103, 902, 8],
    stats: ONE_05("TrackEtaLoose_ImpactPoint_GenTk", ["5.87768e+07", "0.0136", "1.586"], ["3.47588e+09", "-0.022358", "1.58133"])
}, [1405, 1175, 1060, 975, 962, 942, 985, 1050, 1080, 1075, 1060, 1045, 1040, 1035, 1025, 985, 1005, 998, 995, 1003, 1020, 1045, 1043, 1000, 942, 938, 970, 1010, 1270, 1458]));

/* ---------- 06a Quality ---------- */
plot("p06a", {
    w: 722, h: TALL, f: [71, 60, 641, 489], z: [170, 257, 1345, 1416], ts: 19,
    title: ["Quality_GenTk", 14, 32, 25],
    tc: "#444", tly: 10, tlx: 14, fc: "#444", fw: 1.4, topc: "#000", topw: 2.6,
    yt: { labels: ["60", "58", "56", "54", "52", "50"], a: 392, b: 1248, m: 4 },
    xl: ["Track quality", 1327, 1512, 24],
    yl: ["Number of Tracks", 115, 257, 20],
    exp: ["×10⁶", 170, 246, 19],
    stats: pair([556, 689, 9, 95, 181, 267], "Quality_GenTk", ["1.60387e+08", "0.9376", "0.8157"], ["6.85526e+09", "0.945145", "0.815865"], 18, 11.5, 20, true),
    draw(g) {
        g.line([[170, 505], [563, 505], [563, 983], [952, 983], [952, 1357], [1345, 1357]], "#000", 2.6);
        [[170, 563, 562, 365], [563, 952, 978, 757], [952, 1345, 1311, 1148]].forEach(s => {
            g.line([[s[0], s[2]], [s[1], s[2]]], BLUE, 1.4);
            g.cross([[s[3], s[2]]], BLUE, 5);
        });
        [563, 952].forEach(x => g.line([[x, 1380], [x, 1416]], "#444", 1));
        [["loose", 365], ["tight", 757], ["highPurity", 1146]].forEach(t => g.text(t[0], t[1], 1455, 13, "middle", "#555"));
    }
});

/* ---------- 06b Tracks from vertex ---------- */
const GEO_06B = [278, 350, 9, 95, 180, 266];
const HARD = [1375, 1375, 1320, 1180, 1015, 800, 568, 412, 340, 378, 458, 618, 742, 888, 1005, 1115, 1172, 1228, 1275, 1305, 1330, 1348, 1362, 1372, 1378, 1382, 1385, 1387, 1388, 1389];
plot("p06b", {
    w: 357, h: TALL, f: [37, 59, 322, 488], z: [116, 270, 735, 1390], ts: 14,
    title: ["NumberofTracks_Hardvtx_GenTk", 18, 26, 14],
    yt: { labels: ["0", "0.5", "1", "1.5", "2", "2.5", "3", "3.5", "4", "4.5"], a: 1390, b: 283, m: 5 },
    xt: { labels: ["0", "100", "200", "300", "400", "500"], a: 116, b: 631, m: 5 },
    xl: ["of Tracks per Event (matched main vertex)", 702, 1482, 15],
    yl: ["Number of Events", 90, 270, 14],
    exp: ["×10³", 116, 265, 13],
    stats: pair(GEO_06B, "NumberofTracks_Hardvtx_GenTk", ["38370", "100.7", "40.18"], ["1.88006e+06", "98.953", "39.6874"], 3, 6.4, 12),
    draw(g) {
        g.line(steps(116, 10.3, HARD, 1390), BLACK, 1.5);
        g.cross(centers(116, 10.3, HARD, 12), BLUE, 2);
        let tail = [395, 410, 425, 440, 455, 470, 485, 500, 515, 540, 615];
        g.cross(tail.map(x => [x, 1388]), BLUE, 1.6);
    }
});

const PU_BLACK = [[930, 1390], [940, 1100], [950, 900], [960, 740], [970, 600], [985, 440], [1000, 330], [1020, 280], [1050, 300], [1070, 370], [1090, 450], [1110, 560], [1130, 680], [1145, 790], [1160, 900], [1175, 980], [1190, 1070], [1205, 1170], [1222, 1270]];
const PU_BLUE = [[895, 820], [898, 950], [905, 1060], [912, 1110], [918, 1050], [925, 1000], [930, 900], [935, 800], [940, 700], [945, 600], [952, 520], [960, 450], [970, 390], [980, 340], [992, 318], [1005, 305], [1018, 320], [1030, 340], [1045, 380], [1060, 430], [1075, 490], [1090, 560], [1105, 640], [1120, 720], [1135, 810], [1150, 900], [1165, 1010], [1180, 1120], [1190, 1190], [1200, 1260], [1208, 1320], [1215, 1385]];
plot("p06b", {
    w: 357, h: TALL, f: [37, 59, 321, 488], z: [893, 270, 1512, 1390], ts: 14,
    title: ["NumberOfTracks_PUvtx_GenTk", 23, 26, 14],
    yt: { labels: ["1", "10", "10²"], a: 1278, b: 528, m: 0 },
    xt: { labels: ["0", "1", "2", "3", "4", "5"], a: 893, b: 1407, m: 5 },
    xl: ["of Tracks per Event (matched a PU vertex)", 1480, 1482, 15],
    yl: ["Number of Events", 868, 270, 14],
    exp: ["×10³", 1515, 1390, 13],
    stats: pair([279, 351, 9, 95, 180, 266], "NumberOfTracks_PUvtx_GenTk", ["38370", "1428", "378.3"], ["1.88006e+06", "1220.09", "409.056"], 3, 6.4, 12),
    draw(g) {
        g.hlines(logLines([1653, 1278, 903, 528], 375, 270, 1390), "#b4b4b4", 1, "3 1");
        let black = sampled(PU_BLACK, 930, 1222, 120, 34);
        g.line(steps(930, 292 / 120, black, 1390), BLACK, 1.6);
        [925, 934, 940, 945].forEach(x => g.line([[x, 1390], [x, 1165 + (x % 7) * 20]], BLACK, 1.6));
        [1165, 1180, 1195, 1205, 1212, 1218].forEach((x, i) => g.line([[x, 960 + i * 40], [x, 1280]], BLACK, 1.6));
        [1205, 1212, 1222, 1232, 1248, 1256, 1272, 1285, 1295, 1302, 1320].forEach(x => g.line([[x, 1390], [x, 1278]], BLACK, 1.6));
        g.cross(PU_BLUE, BLUE, 2);
        let dense = range(90).map(i => {
            let x = 940 + i * 3;
            return [x, interp(PU_BLUE, x)];
        });
        g.cross(dense, BLUE, 2);
        g.cross([[893, 610]], BLUE, 2);
    }
});

/* ---------- 06c Distance wrt beam spot ---------- */
const GEO_06C = [278, 348, 8, 50, 93, 135];
const DXY = [[120, 712], [200, 685], [260, 655], [320, 625], [350, 605], [380, 570], [395, 520], [405, 460], [412, 405], [418, 320], [420, 200], [433, 200], [436, 320], [445, 405], [452, 460], [462, 515], [475, 570], [505, 610], [560, 645], [620, 670], [680, 690], [737, 712]];
plot("p06c", {
    w: 357, h: 269, f: [37, 33, 320, 246], z: [120, 200, 737, 758],
    title: ["DistanceOfClosestApproachToBS_GenTk", 15, 19, 11.3],
    yt: { labels: ["10⁴", "10⁵", "10⁶"], a: 612, b: 290, m: 0 },
    xt: { labels: ["−0.5", "−0.4", "−0.3", "−0.2", "−0.1", "0", "0.1", "0.2", "0.3", "0.4", "0.5"], a: 120, b: 737, m: 5 },
    xl: ["Track d<tspan dy=\"3\" font-size=\"8\">xy</tspan><tspan dy=\"-3\"> wrt beam spot (cm)</tspan>", 722, 800, 12],
    yl: ["Number of Tracks", 90, 200, 11],
    stats: pair(GEO_06C, "DistanceOfClosestApproachToBS_GenTk", ["9668825", "6.93e-05", "0.06115"], ["4.1289e+08", "8.8409e-05", "0.0507189"], 3.4, 6.2, 9),
    draw(g) {
        g.hlines(logLines([774, 612, 450, 290], 162, 200, 758), "#ccc", 1, "3 1");
        let x0 = 120, n = 100, dx = 617 / n;
        g.line(steps(x0, dx, sampled(DXY, x0, 737, n, 2), 758), BLACK, 1.5);
        g.cross(range(n).map(i => {
            let x = x0 + (i + 0.5) * dx;
            let y = interp(DXY, x);
            return [x, y < 600 ? y + 2 : y + 8];
        }), BLUE, 1.6);
    }
});

const gaussDz = x => 755 - 527 * Math.exp(-((x - 1205) * (x - 1205)) / (2 * 60 * 60));
plot("p06c", {
    w: 357, h: 269, f: [37, 33, 320, 246], z: [897, 200, 1514, 758],
    title: ["DistanceOfClosestApproachToBSdz_GenTk", 17, 19, 10.8],
    yt: { labels: ["0", "0.05", "0.1", "0.15", "0.2", "0.25", "0.3", "0.35", "0.4"], a: 758, b: 252, m: 5 },
    xt: { labels: ["−20", "−15", "−10", "−5", "0", "5", "10", "15", "20"], a: 897, b: 1514, m: 5 },
    xl: ["Track d<tspan dy=\"3\" font-size=\"8\">z</tspan><tspan dy=\"-3\"> wrt beam spot (cm)</tspan>", 1502, 805, 12],
    yl: ["Number of Tracks", 868, 200, 11],
    exp: ["×10⁶", 895, 194, 8],
    stats: pair(GEO_06C, "DistanceOfClosestApproachToBSdz_GenTk", ["9668825", "0.0008669", "3.96"], ["4.1289e+08", "-0.00393408", "3.9748"], 3.4, 6.2, 9),
    draw(g) {
        let dx = 617 / 60;
        g.line(steps(897, dx, range(60).map(i => gaussDz(897 + (i + 0.5) * dx)), 758), BLACK, 1.5);
        g.cross(range(120).map(i => {
            let x = 897 + (i + 0.5) * 5.14;
            return [x, gaussDz(x) + 3];
        }), BLUE, 1.6);
    }
});

function flat(pts) {
    return pts.slice(1, pts.length - 1);
}

plot("p06c", {
    w: 357, h: 269, f: [37, 33, 320, 246], z: [120, 903, 737, 1460],
    title: ["DistanceOfClosestApproachToBSVsPhi_GenTk", 15, 19, 9.9],
    yt: { labels: ["−20", "−15", "−10", "−5", "0", "5", "10", "15", "20"], a: 1460, b: 917, m: 5 },
    xt: { labels: ETA, a: 131, b: 724, m: 5 },
    xl: ["Track ϕ", 737, 1505, 12],
    yl: ["Track d<tspan dy=\"3\" font-size=\"8\">xy</tspan><tspan dy=\"-3\"> wrt beam spot (cm)</tspan>", 80, 918, 11.5],
    exp: ["×10⁻³", 120, 896, 8],
    draw(g) {
        let black = [1190, 1188, 1183, 1190, 1186, 1178, 1182, 1186, 1180, 1175, 1190, 1188, 1186, 1192, 1188, 1190, 1186, 1185, 1187, 1180, 1178, 1186, 1183, 1185, 1178];
        let blue = [1188, 1186, 1186, 1190, 1188, 1180, 1178, 1176, 1172, 1178, 1184, 1186, 1186, 1190, 1193, 1190, 1190, 1192, 1197, 1180, 1176, 1186, 1184, 1186, 1180];
        g.line(flat(steps(120, 24.68, black, 0)), BLACK, 1.6);
        g.line(flat(steps(120, 24.68, blue, 0)), BLUE, 1.6);
    }
});

const ERRS = [[906, 922, 48], [925, 1208, 28], [945, 1358, 22], [965, 1400, 32], [985, 1312, 32], [1005, 1268, 30], [1025, 1296, 30], [1045, 1348, 32], [1065, 1330, 30], [1085, 1280, 30], [1105, 1280, 26], [1125, 1288, 28], [1145, 1308, 28], [1165, 1325, 28], [1185, 1268, 30], [1205, 1320, 30], [1225, 1305, 28], [1245, 1302, 28], [1265, 1320, 30], [1285, 1352, 28], [1305, 1300, 26], [1325, 1320, 28], [1345, 1275, 24], [1365, 1338, 30], [1385, 1272, 30], [1405, 1303, 30], [1425, 1320, 30], [1445, 1300, 30], [1465, 1330, 24], [1485, 1272, 30], [1503, 1360, 62]];
plot("p06c", {
    w: 357, h: 269, f: [37, 33, 320, 246], z: [897, 903, 1514, 1460],
    title: ["DistanceOfClosestApproachToBSVsEta_GenTk", 15, 19, 9.8],
    yt: { labels: ["−0.5", "0", "0.5", "1", "1.5"], a: 1446, b: 958, m: 5 },
    xt: { labels: ETA, a: 897, b: 1514, m: 5 },
    xl: ["Track&#160;&#160;η", 1514, 1505, 12],
    yl: ["Track d<tspan dy=\"3\" font-size=\"8\">xy</tspan><tspan dy=\"-3\"> wrt beam spot (cm)</tspan>", 858, 918, 11.5],
    exp: ["×10⁻³", 895, 896, 8],
    draw(g) {
        g.line([[935, 903], [935, 1297], [955, 1297], [955, 1360], [975, 1360], [975, 1335], [995, 1335], [995, 1325], [1035, 1325], [1055, 1310], [1100, 1318], [1135, 1318], [1155, 1328], [1200, 1318], [1235, 1328], [1300, 1315], [1355, 1332], [1410, 1335], [1410, 1352], [1435, 1352], [1435, 1310], [1473, 1310], [1473, 992], [1493, 992], [1493, 955], [1514, 955]], BLUE, 1.7);
        ERRS.forEach(p => {
            g.line([[p[0], p[1] - p[2]], [p[0], p[1] + p[2]]], BLACK, 1.2);
            g.line([[p[0] - 10, p[1]], [p[0] + 10, p[1]]], BLACK, 1.2);
        });
    }
});
```
